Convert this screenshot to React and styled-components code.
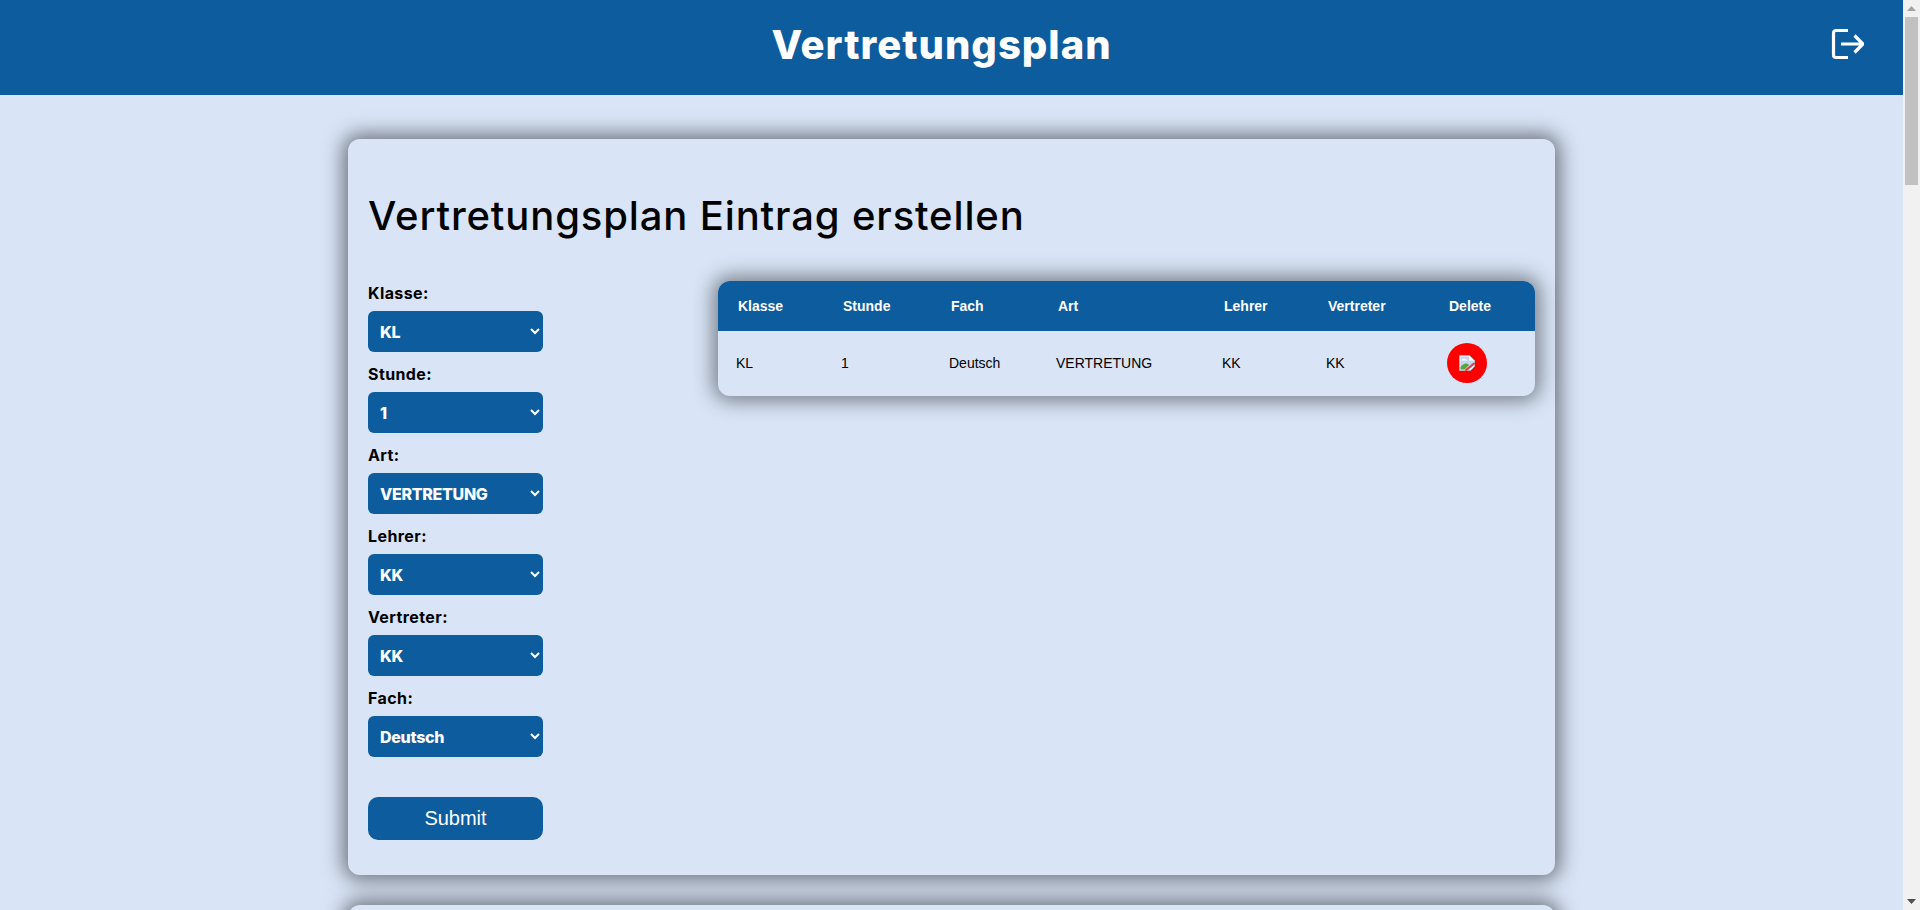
import React from "react";
import styled, { createGlobalStyle } from "styled-components";

const BLUE = "#0c5c9e";
const BG = "#d9e5f7";
const DISPLAY = `Inter, "Liberation Sans", sans-serif`;

const Global = createGlobalStyle`
  body { margin: 0; padding-right: 17px; background: ${BG}; font-family: "Liberation Sans", Arial, sans-serif; }
`;

const ScrollBar = styled.div`
  position: fixed;
  top: 0;
  right: 0;
  bottom: 0;
  width: 17px;
  background: #f1f1f1;
  display: flex;
  flex-direction: column;
  align-items: center;
`;
const ScrollArrow = styled.svg`
  flex: none;
  display: block;
  color: ${(p) => p.$color};
`;
const ScrollTrack = styled.div`
  flex: 1;
  align-self: stretch;
`;
const ScrollThumb = styled.div`
  width: 13px;
  height: 168px;
  margin: 0 auto;
  background: #c1c1c1;
`;

const Header = styled.header`
  height: 95px;
  background: ${BLUE};
  display: flex;
  align-items: center;
  padding: 0 39px 0 55px;
`;
const Title = styled.h1`
  flex: 1;
  margin: 0 0 5px;
  text-align: center;
  color: #fff;
  font: 800 40px/60px ${DISPLAY};
  letter-spacing: 1px;
`;
const LogoutButton = styled.button`
  width: 36px;
  height: 36px;
  margin-bottom: 7px;
  padding: 0;
  border: 0;
  background: none;
  color: #fff;
  display: flex;
`;
const Main = styled.main`
  width: 1207px;
  margin: 0 auto;
  padding: 44px 0 40px;
  display: flex;
  flex-direction: column;
  gap: 30px;
`;
const Card = styled.section`
  background: ${BG};
  border-radius: 12px;
  box-shadow: 0 0 20px 5px rgba(0, 0, 0, 0.5);
  padding: 47px 20px 35px;
  min-height: 736px;
  box-sizing: border-box;
`;
const Heading = styled.h2`
  margin: 0 0 35px;
  color: #000;
  font: 500 40px/60px ${DISPLAY};
  letter-spacing: 0.86px;
`;
const Content = styled.div`
  display: flex;
  align-items: flex-start;
  gap: 175px;
`;
const Form = styled.form`
  width: 175px;
  flex: none;
  display: flex;
  flex-direction: column;
`;
const Label = styled.label`
  color: #000;
  font: 700 16px/24px ${DISPLAY};
  letter-spacing: 0.4px;
  margin-bottom: 6px;
`;
const Select = styled.select`
  height: 41px;
  margin-bottom: 10px;
  padding: 0 0 0 8px;
  border: 0;
  border-radius: 6px;
  background-color: ${BLUE};
  color: #fff;
  font: 800 16px ${DISPLAY};
  letter-spacing: -0.3px;
`;
const Submit = styled.button`
  height: 43px;
  margin-top: 30px;
  border: 0;
  border-radius: 10px;
  background: ${BLUE};
  color: #fff;
  font: 400 20px "Liberation Sans", Arial, sans-serif;
`;
const TableCard = styled.div`
  flex: 1;
  border-radius: 12px;
  overflow: hidden;
  box-shadow: 0 0 20px 5px rgba(0, 0, 0, 0.45);
`;
const Table = styled.table`
  width: 100%;
  border-collapse: collapse;
  table-layout: fixed;
  font-size: 14px;
  color: #000;
`;
const Th = styled.th`
  height: 50px;
  padding: 0 0 0 20px;
  background: ${BLUE};
  color: #fff;
  font-weight: 700;
  text-align: left;
`;
const Td = styled.td`
  height: 63px;
  padding: 0 0 2px 18px;
`;
const DeleteButton = styled.button`
  display: flex;
  align-items: center;
  justify-content: center;
  width: 40px;
  height: 40px;
  padding: 0;
  border: 0;
  border-radius: 50%;
  background: #f00;
`;

const fields = [
  ["Klasse", "KL", ["KL", "5A", "5B"]],
  ["Stunde", "1", ["1", "2", "3", "4", "5", "6"]],
  ["Art", "VERTRETUNG", ["VERTRETUNG", "ENTFALL"]],
  ["Lehrer", "KK", ["KK", "MM"]],
  ["Vertreter", "KK", ["KK", "MM"]],
  ["Fach", "Deutsch", ["Deutsch", "Mathematik", "Englisch"]],
];
const columns = [
  ["Klasse", 105, "KL"],
  ["Stunde", 108, "1"],
  ["Fach", 107, "Deutsch"],
  ["Art", 166, "VERTRETUNG"],
  ["Lehrer", 104, "KK"],
  ["Vertreter", 121, "KK"],
];

const LogoutIcon = () => (
  <svg width="36" height="36" viewBox="0 0 36 36" fill="none" stroke="currentColor" strokeWidth="3.2">
    <path d="M20 4.500H8a2.500 2.500 0 0 0-2.500 2.500v22A2.500 2.500 0 0 0 8 31.500h12" />
    <path d="M13 18h22M26.500 9.500l8.500 8.500-8.500 8.500" />
  </svg>
);

const BrokenImage = () => (
  <svg width="16" height="16" viewBox="0 0 16 16">
    <path d="M.5.5h10l5 5v6l-4 4h-11z" fill="#fff" stroke="#b5b5b5" />
    <path d="M1.500 1.500h8.500v4h4.500v5l-4 4h-9z" fill="#c4d6ee" />
    <path d="M3 4.500c1-1.400 3-1.400 4 0 .8 0 1.200.5 1.200 1H2.500c0-.5.2-1 .5-1z" fill="#fff" />
    <path d="M1.500 14.500v-2.500c2-2.800 4.500-4 6.500-3.500l2 1.500-4.500 4.500z" fill="#5ba33c" />
    <path d="M6.500 15.500 15.500 8" stroke="#f33" strokeWidth="2" fill="none" />
  </svg>
);

export default function App() {
  return (
    <>
      <Global />
      <Header>
        <Title>Vertretungsplan</Title>
        <LogoutButton aria-label="Logout">
          <LogoutIcon />
        </LogoutButton>
      </Header>
      <Main>
        <Card>
          <Heading>Vertretungsplan Eintrag erstellen</Heading>
          <Content>
            <Form>
              {fields.map(([label, value, options]) => (
                <React.Fragment key={label}>
                  <Label>{label}:</Label>
                  <Select defaultValue={value}>
                    {options.map((o) => (
                      <option key={o}>{o}</option>
                    ))}
                  </Select>
                </React.Fragment>
              ))}
              <Submit type="button">Submit</Submit>
            </Form>
            <TableCard>
              <Table>
                <colgroup>
                  {columns.map(([name, width]) => (
                    <col key={name} width={width} />
                  ))}
                  <col />
                </colgroup>
                <thead>
                  <tr>
                    {columns.map(([name]) => (
                      <Th key={name}>{name}</Th>
                    ))}
                    <Th>Delete</Th>
                  </tr>
                </thead>
                <tbody>
                  <tr>
                    {columns.map(([name, , value]) => (
                      <Td key={name}>{value}</Td>
                    ))}
                    <Td>
                      <DeleteButton aria-label="Delete">
                        <BrokenImage />
                      </DeleteButton>
                    </Td>
                  </tr>
                </tbody>
              </Table>
            </TableCard>
          </Content>
        </Card>
        <Card />
      </Main>
      <ScrollBar aria-hidden="true">
        <ScrollArrow width="17" height="17" viewBox="0 0 17 17" $color="#a3a3a3">
          <path d="M8.500 6 13 11H4z" fill="currentColor" />
        </ScrollArrow>
        <ScrollTrack>
          <ScrollThumb />
        </ScrollTrack>
        <ScrollArrow width="17" height="17" viewBox="0 0 17 17" $color="#505050">
          <path d="M8.500 11 13 6H4z" fill="currentColor" />
        </ScrollArrow>
      </ScrollBar>
    </>
  );
}
